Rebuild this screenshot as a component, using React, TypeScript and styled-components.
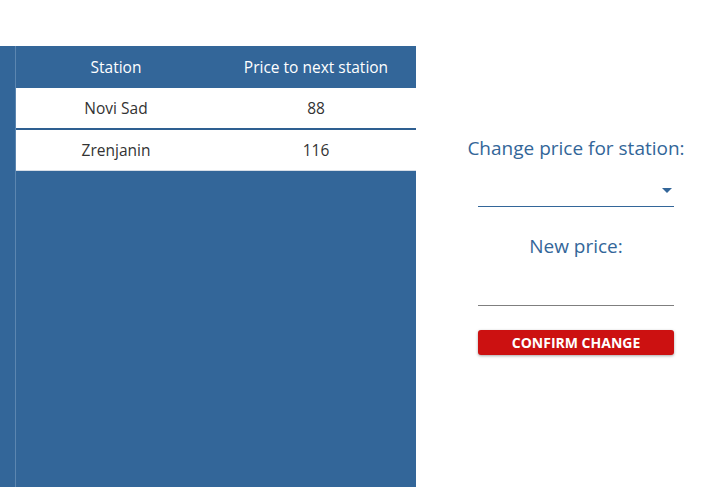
import React, { useState } from 'react';
import styled, { createGlobalStyle } from 'styled-components';

const GlobalStyle = createGlobalStyle`
  html, body {
    margin: 0;
    padding: 0;
    background: #fff;
    font-family: "Open Sans", "Noto Sans", "Liberation Sans", sans-serif;
  }
`;

type Station = { name: string; price: number };

const stations: Station[] = [
  { name: 'Novi Sad', price: 88 },
  { name: 'Zrenjanin', price: 116 },
];

export default function App() {
  const [selected, setSelected] = useState('');
  const [price, setPrice] = useState('');

  return (
    <>
      <GlobalStyle />
      <Page>
        <Board>
          <Side />
          <TableArea>
            <Table>
              <thead>
                <tr>
                  <Th>Station</Th>
                  <Th>Price to next station</Th>
                </tr>
              </thead>
              <tbody>
                {stations.map((s, i) => (
                  <Tr key={s.name} $last={i === stations.length - 1}>
                    <Td>{s.name}</Td>
                    <Td>{s.price}</Td>
                  </Tr>
                ))}
              </tbody>
            </Table>
          </TableArea>
        </Board>

        <Panel>
          <Label>Change price for station:</Label>
          <SelectWrap>
            <Select value={selected} onChange={e => setSelected(e.target.value)}>
              <option value=""></option>
              {stations.map(s => (
                <option key={s.name} value={s.name}>{s.name}</option>
              ))}
            </Select>
            <Caret />
          </SelectWrap>
          <Label $top={27}>New price:</Label>
          <PriceInput value={price} onChange={e => setPrice(e.target.value)} />
          <ConfirmButton type="button">CONFIRM CHANGE</ConfirmButton>
        </Panel>
      </Page>
    </>
  );
}

const Page = styled.div`
  width: 709px;
  height: 487px;
  display: flex;
  padding-top: 46px;
  box-sizing: border-box;
`;

const Board = styled.div`
  width: 416px;
  height: 441px;
  display: flex;
  background: #336699;
`;

const Side = styled.div`
  width: 15px;
  border-right: 1px solid #5c86b0;
`;

const TableArea = styled.div`
  flex: 1;
`;

const Table = styled.table`
  width: 100%;
  border-collapse: collapse;
  font-size: 15.5px;
  line-height: 20px;
`;

const Th = styled.th`
  height: 42px;
  padding: 0;
  color: #fff;
  font-weight: 400;
  text-align: center;
  width: 50%;
`;

const Tr = styled.tr<{ $last: boolean }>`
  background: #fff;
  border-bottom: ${({ $last }) => ($last ? '1px solid #d6dde6' : '2px solid #2e5f91')};
`;

const Td = styled.td`
  height: 40px;
  padding: 0;
  color: #333;
  text-align: center;
`;

const Panel = styled.div`
  flex: 1;
  display: flex;
  flex-direction: column;
  align-items: center;
  padding-top: 90px;
  padding-left: 27px;
`;

const Label = styled.div<{ $top?: number }>`
  margin-top: ${({ $top }) => $top ?? 0}px;
  font-size: 19px;
  color: #336699;
  line-height: 24px;
`;

const SelectWrap = styled.div`
  position: relative;
  width: 196px;
  margin-top: 16px;
  border-bottom: 1px solid #336699;
`;

const Select = styled.select`
  width: 100%;
  height: 30px;
  border: 0;
  background: transparent;
  appearance: none;
  outline: none;
  font-family: inherit;
  font-size: 15px;
`;

const Caret = styled.span`
  position: absolute;
  right: 2px;
  top: 12px;
  width: 0;
  height: 0;
  border-left: 5px solid transparent;
  border-right: 5px solid transparent;
  border-top: 5px solid #336699;
  pointer-events: none;
`;

const PriceInput = styled.input`
  width: 196px;
  height: 30px;
  margin-top: 18px;
  border: 0;
  border-bottom: 1px solid #7f7f7f;
  outline: none;
  background: transparent;
  font-family: inherit;
  font-size: 15px;
  box-sizing: border-box;
`;

const ConfirmButton = styled.button`
  margin-top: 24px;
  width: 196px;
  height: 25px;
  padding: 0;
  border: 0;
  border-radius: 3px;
  background: #cc1111;
  color: #fff;
  font-family: inherit;
  font-size: 14px;
  font-weight: 700;
  box-shadow: 0 1px 3px rgba(0, 0, 0, 0.35);
  cursor: pointer;
`;
